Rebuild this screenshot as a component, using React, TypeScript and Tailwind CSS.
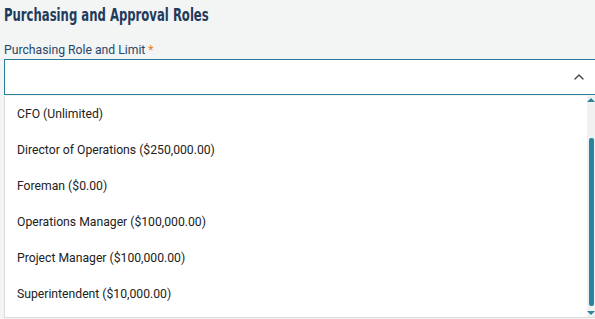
import { ChevronUp } from "lucide-react";

const roles = [
  "CFO (Unlimited)",
  "Director of Operations ($250,000.00)",
  "Foreman ($0.00)",
  "Operations Manager ($100,000.00)",
  "Project Manager ($100,000.00)",
  "Superintendent ($10,000.00)",
];

export default function App() {
  return (
    <div className="h-[319px] w-[595px] overflow-hidden bg-[#f3f4f4] pl-1 font-['Roboto',sans-serif]">
      <h2 className="pt-[5px] font-['DejaVu_Sans_Condensed',sans-serif] text-[18px] font-bold leading-5 text-[#1f3b5c]">
        <span className="inline-block origin-left scale-x-[0.72]">Purchasing and Approval Roles</span>
      </h2>
      <label className="mt-[17px] block text-[12.2px] leading-4 text-[#27476a]">
        Purchasing Role and Limit <span className="text-[#f07c22]">*</span>
      </label>
      <div className="mt-[1px] flex h-[36px] w-[600px] items-center justify-end border border-[#2a7c9b] bg-white pr-[16px]">
        <ChevronUp className="h-4 w-4 text-[#444]" strokeWidth={2} />
      </div>
      <div className="mt-[1px] flex h-[222px] w-[591px] border-b border-l border-[#dcdcdc] bg-white">
        <ul className="flex-1">
          {roles.map((r) => (
            <li key={r} className="flex h-[36px] items-center pl-[12px] text-[12.2px] text-[#222]">
              {r}
            </li>
          ))}
        </ul>
        <div className="flex w-[8px] flex-col items-center bg-[#f1f1f1] py-[2px]">
          <div className="h-0 w-0 border-x-[4px] border-b-[4px] border-x-transparent border-b-[#2a86a0]" />
          <div className="mt-[36px] h-[168px] w-[5px] rounded-[2px] bg-[#2a86a0]" />
          <div className="mt-[5px] h-0 w-0 border-x-[4px] border-t-[4px] border-x-transparent border-t-[#2a86a0]" />
        </div>
      </div>
    </div>
  );
}
